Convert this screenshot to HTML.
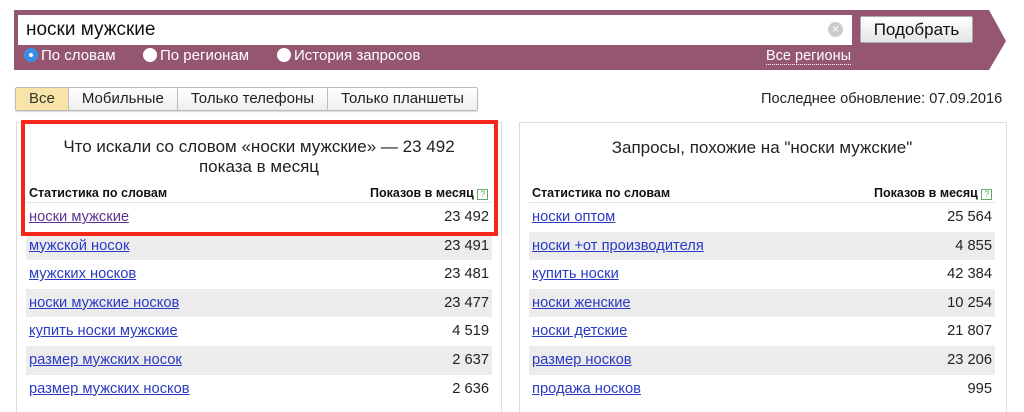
<!DOCTYPE html>
<html><head><meta charset="utf-8"><style>
*{margin:0;padding:0;box-sizing:border-box}
body{width:1024px;height:401px;background:#fff;font-family:"Liberation Sans","Noto Sans CJK SC",sans-serif;color:#222;position:relative;overflow:hidden}
.a{position:absolute}
.bar{left:14px;top:10px;width:992px;height:60px;background:#945670;clip-path:polygon(0 0,975px 0,992px 31px,975px 60px,0 60px)}
.inp{left:18px;top:15px;width:834px;height:30px;background:#fff;font-size:19px;padding:4px 0 0 8px;color:#111}
.clr{left:828px;top:22px;width:15px;height:15px;border-radius:50%;background:#ccc;color:#fff;font-size:12px;line-height:15px;text-align:center}
.btn{left:860px;top:16px;width:113px;height:27px;background:linear-gradient(#fff,#e4e4e4);border:1px solid #aaa;border-radius:2px;font-size:17px;text-align:center;line-height:25px;color:#111}
.rad{top:48px;font-size:15px;color:#fff;line-height:16px}
.rad i{display:inline-block;width:14px;height:14px;border-radius:50%;background:#fff;vertical-align:-2px;margin-right:3px}
.rad i.on{background:#3b8ee8;box-shadow:inset 0 0 0 4px #3b8ee8;position:relative}
.rad i.on:after{content:"";position:absolute;left:5px;top:5px;width:4px;height:4px;border-radius:50%;background:#fff}
.tabs{left:15px;top:87px;height:24px;display:flex;border:1px solid #bbb;border-radius:2px;font-size:15px;box-shadow:0 1px 1px rgba(0,0,0,.15)}
.tabs div{padding:0 13px;line-height:22px;background:linear-gradient(#fff,#eee);border-left:1px solid #bbb}
.tabs div:first-child{border-left:none;background:#f7e4a6;color:#333}
.panel{border:1px solid #ddd;border-bottom:none;top:122px;height:290px}
.ttl{font-size:17px;text-align:center;line-height:20px;color:#222}
.hdr{font-size:12.5px;font-weight:bold;line-height:14px;color:#111}
.q{display:inline-block;width:11px;height:11px;border:1px solid #6a6;color:#6a6;font-size:9px;line-height:9px;text-align:center;font-weight:normal;vertical-align:0}
.row{height:28.6px;font-size:14.7px;line-height:28px;display:flex;justify-content:space-between;padding:0 3px}
.row a{color:#2a3ac2;text-decoration:underline}
.row.g{background:#ececec}
.red{left:21px;top:120px;width:477px;height:116px;border:4px solid #f5271b}
</style></head><body>
<div class="a bar"></div>
<div class="a inp">носки мужские</div>
<div class="a clr">×</div>
<div class="a btn">Подобрать</div>
<div class="a rad" style="left:24px"><i class="on"></i>По словам</div>
<div class="a rad" style="left:143px"><i></i>По регионам</div>
<div class="a rad" style="left:277px"><i></i>История запросов</div>
<div class="a" style="left:766px;top:48px;font-size:14.5px;color:#fff;border-bottom:1px dotted #fff;line-height:16px">Все регионы</div>
<div class="a tabs"><div>Все</div><div>Мобильные</div><div>Только телефоны</div><div>Только планшеты</div></div>
<div class="a" style="left:761px;top:91px;font-size:14.6px;color:#222">Последнее обновление: 07.09.2016</div>

<div class="a panel" style="left:16px;width:486px"></div>
<div class="a ttl" style="left:26px;top:137px;width:466px">Что искали со словом «носки мужские» — 23 492<br>показа в месяц</div>
<div class="a hdr" style="left:29px;top:186px">Статистика по словам</div>
<div class="a hdr" style="left:370px;top:186px">Показов в месяц <span class="q">?</span></div>
<div class="a" style="left:26px;top:202px;width:466px;border-top:1px solid #e4e4e4">
<div class="row"><a style="color:#5a3590">носки мужские</a><span>23 492</span></div>
<div class="row g"><a>мужской носок</a><span>23 491</span></div>
<div class="row"><a>мужских носков</a><span>23 481</span></div>
<div class="row g"><a>носки мужские носков</a><span>23 477</span></div>
<div class="row"><a>купить носки мужские</a><span>4 519</span></div>
<div class="row g"><a>размер мужских носок</a><span>2 637</span></div>
<div class="row"><a>размер мужских носков</a><span>2 636</span></div>
</div>
<div class="a red"></div>

<div class="a panel" style="left:519px;width:488px"></div>
<div class="a ttl" style="left:529px;top:138px;width:466px">Запросы, похожие на "носки мужские"</div>
<div class="a hdr" style="left:532px;top:186px">Статистика по словам</div>
<div class="a hdr" style="left:874px;top:186px">Показов в месяц <span class="q">?</span></div>
<div class="a" style="left:529px;top:202px;width:466px;border-top:1px solid #e4e4e4">
<div class="row"><a>носки оптом</a><span>25 564</span></div>
<div class="row g"><a>носки +от производителя</a><span>4 855</span></div>
<div class="row"><a>купить носки</a><span>42 384</span></div>
<div class="row g"><a>носки женские</a><span>10 254</span></div>
<div class="row"><a>носки детские</a><span>21 807</span></div>
<div class="row g"><a>размер носков</a><span>23 206</span></div>
<div class="row"><a>продажа носков</a><span>995</span></div>
</div>
</body></html>
